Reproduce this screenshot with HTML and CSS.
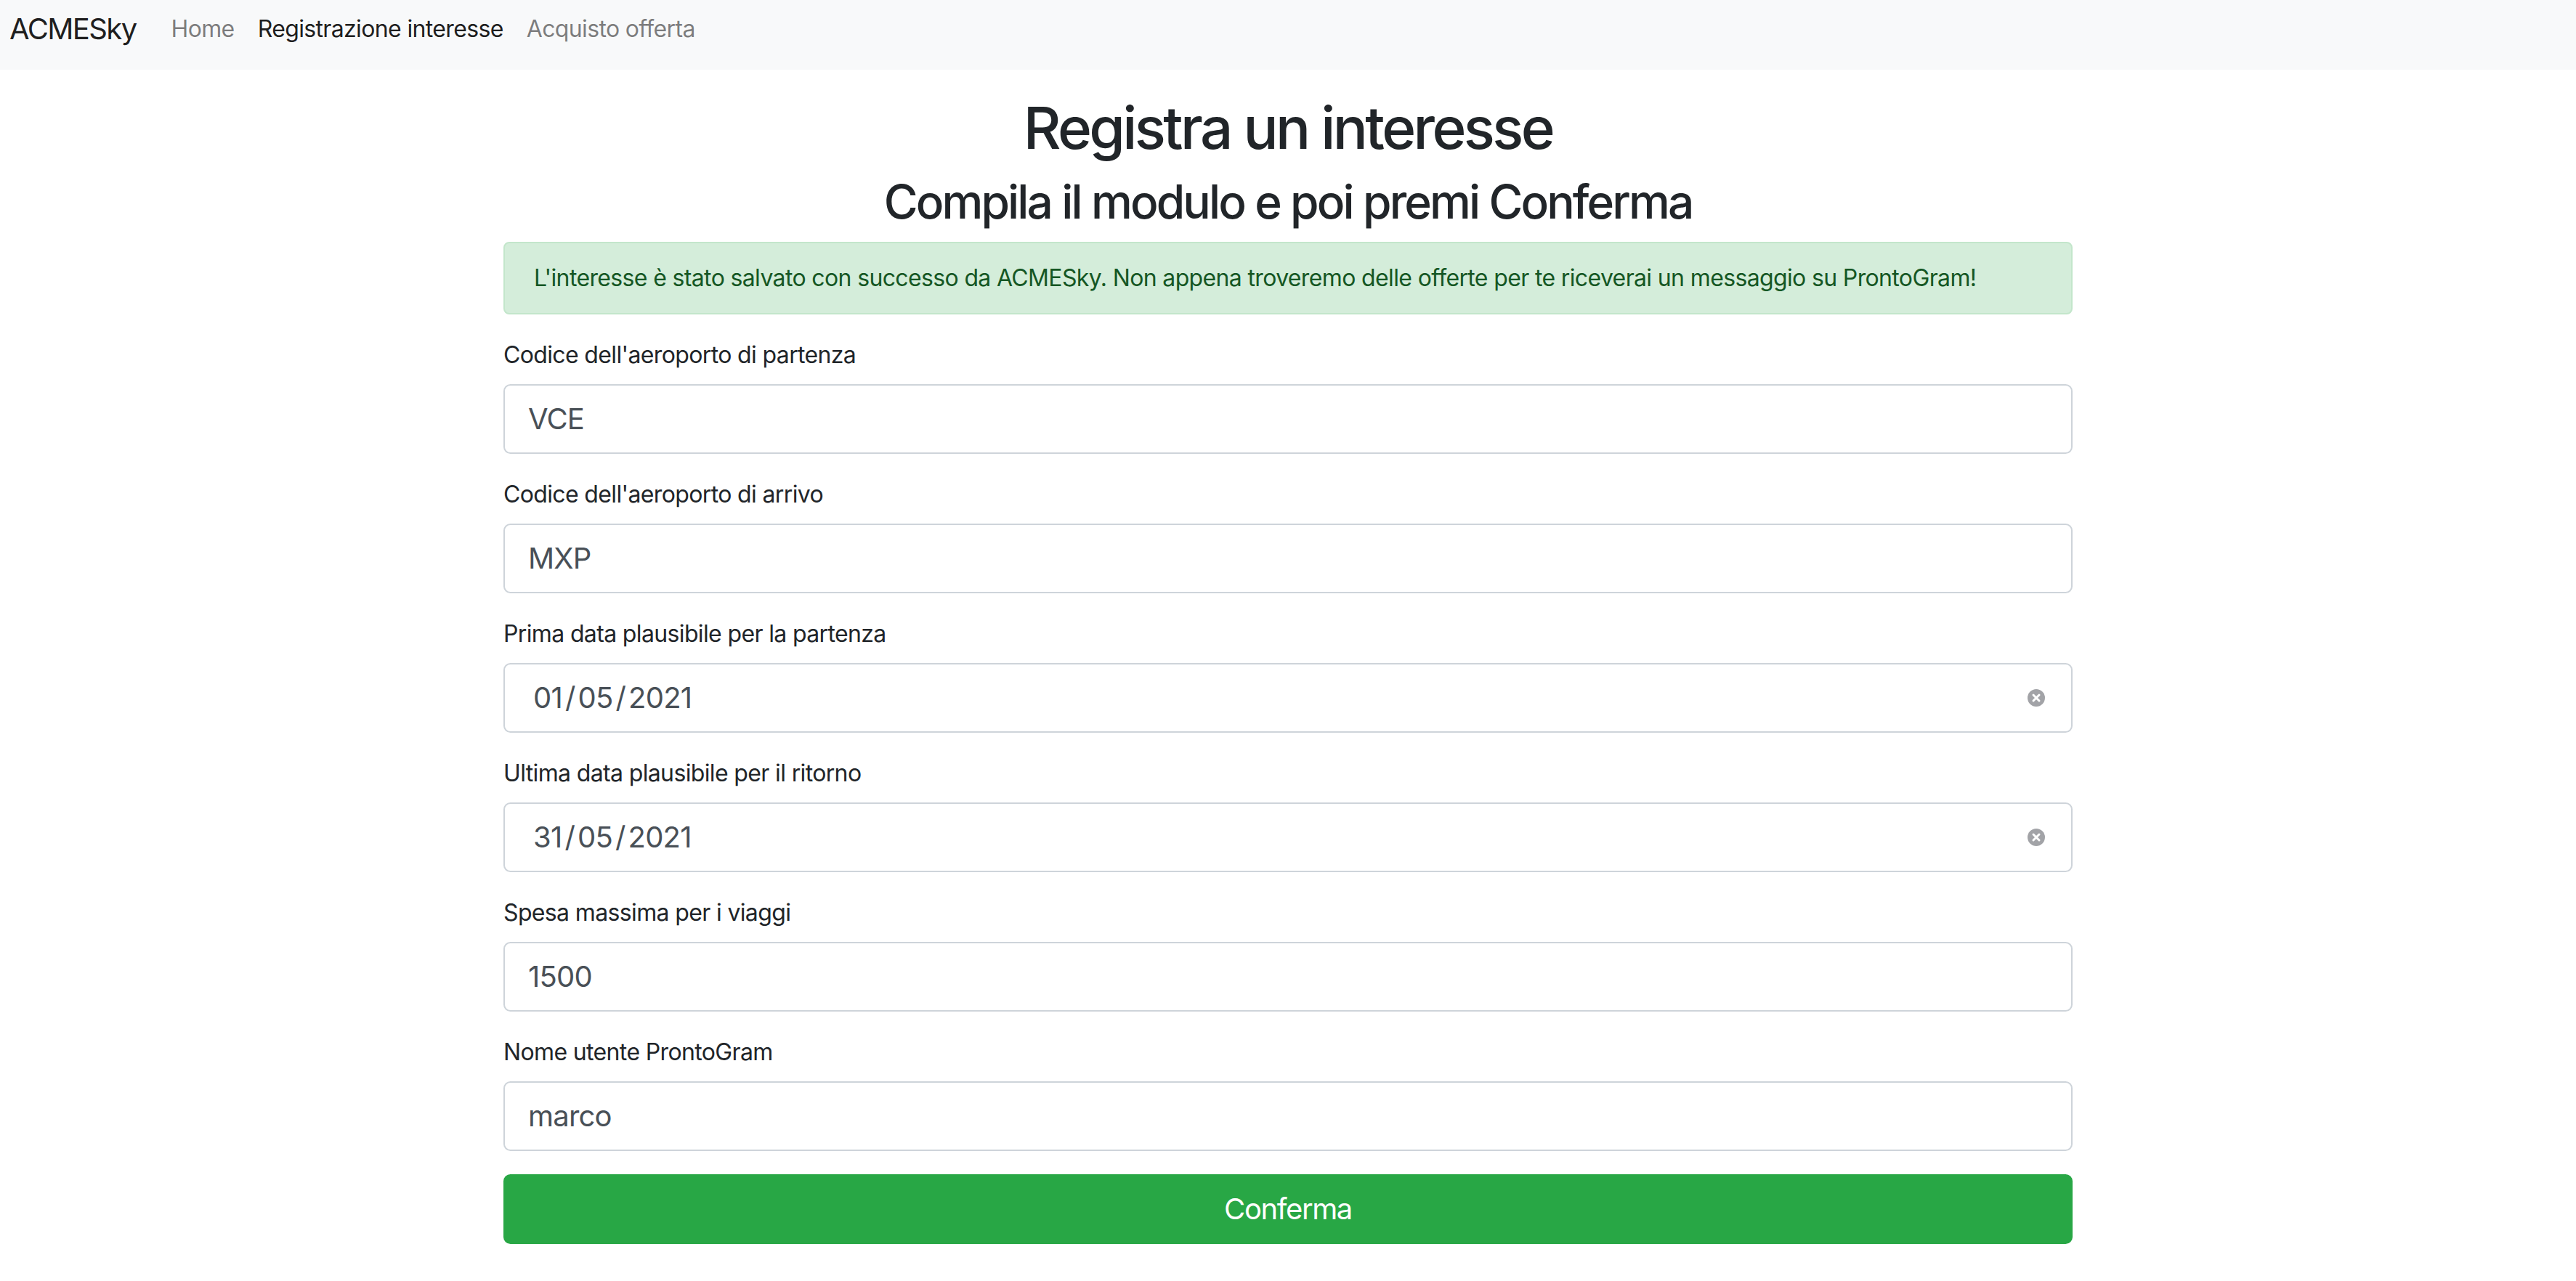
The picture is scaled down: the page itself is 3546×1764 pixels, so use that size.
FILE: index.html
```html
<!DOCTYPE html>
<html lang="it">
<head>
<meta charset="utf-8">
<title>ACMESky - Registra un interesse</title>
<link rel="stylesheet" href="styles.css">
</head>
<body>
<nav class="navbar">
  <a class="brand" href="#">ACMESky</a>
  <ul class="nav">
    <li><a class="nav-link" href="#">Home</a></li>
    <li><a class="nav-link active" href="#">Registrazione interesse</a></li>
    <li><a class="nav-link" href="#">Acquisto offerta</a></li>
  </ul>
</nav>
<main class="container">
  <h1 class="title">Registra un interesse</h1>
  <h2 class="subtitle">Compila il modulo e poi premi Conferma</h2>
  <div class="alert">L'interesse è stato salvato con successo da ACMESky. Non appena troveremo delle offerte per te riceverai un messaggio su ProntoGram!</div>
  <form class="form">
    <div class="form-group">
      <label class="label" for="dep">Codice dell'aeroporto di partenza</label>
      <input class="control" id="dep" type="text" value="VCE">
    </div>
    <div class="form-group">
      <label class="label" for="arr">Codice dell'aeroporto di arrivo</label>
      <input class="control" id="arr" type="text" value="MXP">
    </div>
    <div class="form-group">
      <label class="label">Prima data plausibile per la partenza</label>
      <div class="control date">
        <span class="date-value"><span>01</span><span class="sep">/</span><span>05</span><span class="sep">/</span><span>2021</span></span>
        <svg class="clear" viewBox="0 0 24 24" width="24" height="24"><circle cx="12" cy="12" r="12" fill="#a2a3a7"/><path d="M8 8 L16 16 M16 8 L8 16" stroke="#fff" stroke-width="3" stroke-linecap="round"/></svg>
      </div>
    </div>
    <div class="form-group">
      <label class="label">Ultima data plausibile per il ritorno</label>
      <div class="control date">
        <span class="date-value"><span>31</span><span class="sep">/</span><span>05</span><span class="sep">/</span><span>2021</span></span>
        <svg class="clear" viewBox="0 0 24 24" width="24" height="24"><circle cx="12" cy="12" r="12" fill="#a2a3a7"/><path d="M8 8 L16 16 M16 8 L8 16" stroke="#fff" stroke-width="3" stroke-linecap="round"/></svg>
      </div>
    </div>
    <div class="form-group">
      <label class="label" for="max">Spesa massima per i viaggi</label>
      <input class="control" id="max" type="text" value="1500">
    </div>
    <div class="form-group">
      <label class="label" for="user">Nome utente ProntoGram</label>
      <input class="control" id="user" type="text" value="marco">
    </div>
    <button class="btn" type="button">Conferma</button>
  </form>
</main>
</body>
</html>
```
FILE: styles.css
```css
* { box-sizing: border-box; }
html, body { margin: 0; padding: 0; }
body {
  font-family: Inter, "Noto Sans", "Liberation Sans", sans-serif;
  color: #212529;
  background: #fff;
  font-size: 32px;
  line-height: 48px;
  letter-spacing: -0.02em;
}
.navbar {
  display: flex;
  align-items: center;
  height: 96px;
  padding: 0 12px 16px 13px;
  background: #f8f9fa;
}
.brand {
  font-size: 40px;
  line-height: 60px;
  padding: 10px 0;
  margin-right: 32px;
  letter-spacing: -0.04em;
  color: rgba(0,0,0,.9);
  text-decoration: none;
}
.nav {
  display: flex;
  list-style: none;
  margin: 0;
  padding: 0;
}
.nav-link {
  display: block;
  padding: 16px;
  font-size: 32px;
  line-height: 48px;
  color: rgba(0,0,0,.5);
  text-decoration: none;
}
.nav-link.active { color: rgba(0,0,0,.9); }
.container {
  width: 2160px;
  margin: 0 auto;
  padding-top: 32px;
}
.title, .subtitle {
  margin: 0 0 16px;
  font-weight: 500;
  line-height: 1.2;
  letter-spacing: -0.045em;
  text-align: center;
  color: #212529;
}
.title { font-size: 80px; }
.subtitle { font-size: 64px; }
.alert {
  padding: 24px 40px;
  margin-bottom: 32px;
  background: #d4edda;
  border: 2px solid #c3e6cb;
  border-radius: 8px;
  color: #155724;
}
.form { margin: 0; }
.form-group { margin-bottom: 32px; }
.label {
  display: block;
  margin-bottom: 16px;
}
.control {
  display: block;
  width: 100%;
  height: 96px;
  margin: 0;
  padding: 16px 32px;
  font-family: inherit;
  font-size: 40px;
  line-height: 60px;
  letter-spacing: -0.02em;
  color: #495057;
  background: #fff;
  border: 2px solid #ced4da;
  border-radius: 9.6px;
  outline: none;
}
.date {
  display: flex;
  align-items: center;
  justify-content: space-between;
  padding-left: 39px;
  padding-right: 36px;
}
.date-value { display: flex; }
.sep { margin: 0 4px; }
.clear { display: block; flex: none; }
.btn {
  display: block;
  width: 100%;
  height: 96px;
  padding: 16px 32px;
  font-family: inherit;
  font-size: 40px;
  line-height: 60px;
  letter-spacing: -0.035em;
  color: #fff;
  background: #28a745;
  border: 2px solid #28a745;
  border-radius: 9.6px;
  cursor: pointer;
}
```
